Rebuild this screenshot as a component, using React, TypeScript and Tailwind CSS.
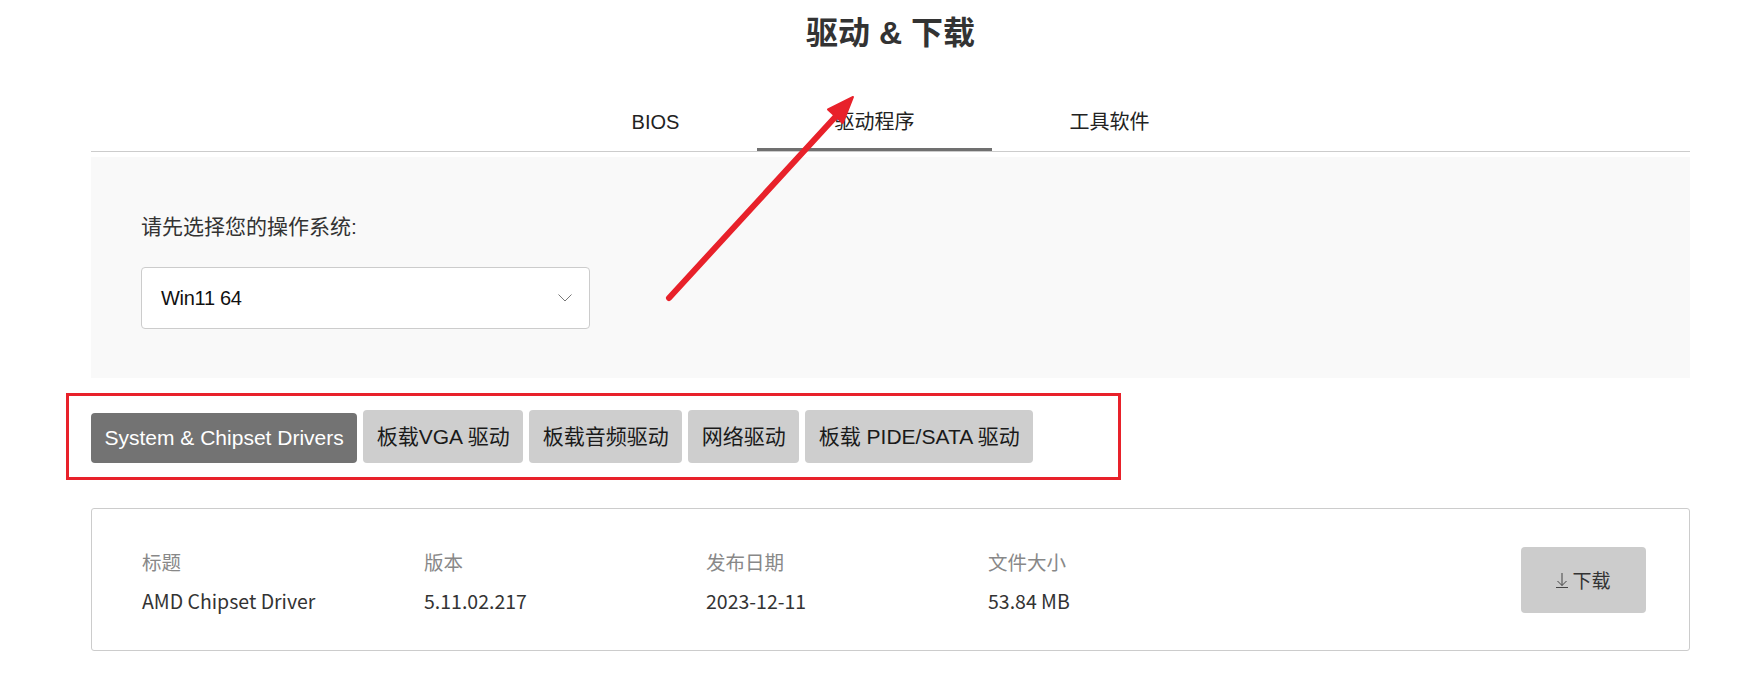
import React from "react";

const tabs = ["BIOS", "驱动程序", "工具软件"];
const categories = [
  "System & Chipset Drivers",
  "板载VGA 驱动",
  "板载音频驱动",
  "网络驱动",
  "板载 PIDE/SATA 驱动",
];

const columns = [
  { label: "标题", value: "AMD Chipset Driver" },
  { label: "版本", value: "5.11.02.217" },
  { label: "发布日期", value: "2023-12-11" },
  { label: "文件大小", value: "53.84 MB" },
];

export default function App() {
  return (
    <div
      className="relative min-h-[691px] w-full bg-white text-[#222]"
      style={{ fontFamily: '"Liberation Sans", "Noto Sans CJK SC", sans-serif' }}
    >
      <div className="ml-[91px] w-[1599px] pt-[14px]">
        <h1 className="h-[38px] text-center text-[32px] font-bold leading-[38px] text-[#333]">
          驱动 &amp; 下载
        </h1>

        {/* tabs */}
        <div className="mt-[43px] flex justify-center border-b border-[#cccccc]">
          {tabs.map((t, i) => (
            <div
              key={t}
              className={`flex h-[56px] items-center border-b-[3px] px-[77.5px] text-[20px] ${
                i === 1 ? "border-[#707070]" : "border-transparent"
              }`}
            >
              {t}
            </div>
          ))}
        </div>

        {/* os select */}
        <div className="mt-[5px] h-[221px] bg-[#f9f9f9] pl-[50px] pt-[55px]">
          <div className="text-[21px] leading-[30px] text-[#333]">请先选择您的操作系统:</div>
          <div className="mt-[25px] flex h-[62px] w-[449px] items-center justify-between rounded-[4px] border border-[#cccccc] bg-white pl-[19px] pr-[17px]">
            <span className="text-[20px] tracking-[-0.3px] text-[#111]">Win11 64</span>
            <svg width="14" height="8" viewBox="0 0 14 8" fill="none">
              <polyline points="0.5,0.5 7,7 13.5,0.5" stroke="#777" strokeWidth="1" />
            </svg>
          </div>
        </div>

        {/* categories */}
        <div className="mt-[32px] flex items-end gap-[6px]">
          {categories.map((c, i) => (
            <button
              key={c}
              className={`whitespace-nowrap rounded-[4px] px-[13.5px] text-[21px] ${
                i === 0 ? "h-[50px] bg-[#737373] text-white" : "h-[53px] bg-[#cecece] text-[#1a1a1a]"
              }`}
            >
              {c}
            </button>
          ))}
        </div>

        {/* driver card */}
        <div
          className="mt-[45px] flex h-[143px] items-start rounded-[3px] border border-[#cccccc] pl-[50px] pr-[43px]"
          style={{ fontFamily: '"Noto Sans CJK SC", "Noto Sans", sans-serif' }}
        >
          {columns.map((c) => (
            <div key={c.label} className="w-[282px] pt-[38px]">
              <div className="text-[19.5px] leading-[30px] text-[#888]">{c.label}</div>
              <div className="mt-[9px] text-[19.5px] leading-[30px] text-[#333]">{c.value}</div>
            </div>
          ))}
          <button className="ml-auto mt-[38px] flex h-[66px] w-[125px] items-center justify-center gap-[4px] rounded-[4px] bg-[#cccccc] text-[19px] text-[#333]">
            <svg width="12" height="15" viewBox="0 0 12 15" fill="none" stroke="#444" strokeWidth="1">
              <line x1="6" y1="0" x2="6" y2="12.5" />
              <polyline points="1.5,8 6,12.5 10.5,8" />
              <line x1="0" y1="14.5" x2="12" y2="14.5" />
            </svg>
            <span>下载</span>
          </button>
        </div>
      </div>

      {/* annotation: red box */}
      <div className="pointer-events-none absolute left-[66px] top-[393px] h-[87px] w-[1055px] border-[3px] border-[#e8212a]" />

      {/* annotation: red arrow */}
      <svg
        className="pointer-events-none absolute left-0 top-0"
        width="1744"
        height="691"
        viewBox="0 0 1744 691"
      >
        <line x1="669" y1="298" x2="838" y2="114" stroke="#e8212a" strokeWidth="6" strokeLinecap="round" />
        <polygon points="853,97 842.8,123 828,109.5" fill="#e8212a" stroke="#e8212a" strokeWidth="2" strokeLinejoin="round" />
      </svg>
    </div>
  );
}
